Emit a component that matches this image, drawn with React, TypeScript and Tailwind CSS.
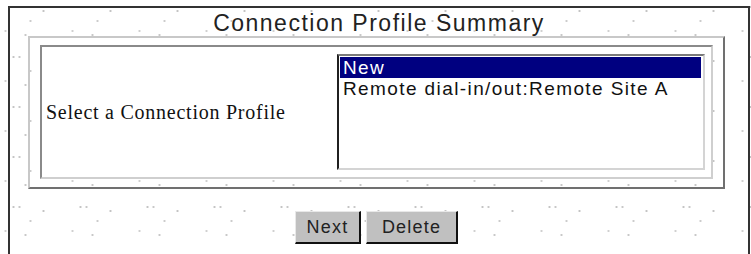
import React from "react";

export default function App() {
  return (
    <div className="w-[751px] h-[254px] overflow-hidden bg-white pt-[6px] pl-[8px] bg-[image:radial-gradient(circle,#c4c4c4_0.9px,transparent_1.3px),radial-gradient(circle,#c8c8c8_0.9px,transparent_1.3px),radial-gradient(circle,#cccccc_0.9px,transparent_1.3px),radial-gradient(circle,#c4c4c4_0.9px,transparent_1.3px),radial-gradient(circle,#d0d0d0_0.9px,transparent_1.3px),radial-gradient(circle,#c8c8c8_0.9px,transparent_1.3px)] bg-[length:67px_50px] bg-[position:-20px_-18px,-14px_-18px,-3px_-4px,10px_-14px,-28px_6px,-8px_10px]">
      <div className="w-[742px] h-[260px] border-2 border-b-0 border-[#333333]">
        <div
          className="pt-[4px] text-center text-[23px] leading-[23px] tracking-[1.5px] text-[#222222]"
          style={{ fontFamily: '"Liberation Sans", Arial, sans-serif' }}
        >
          Connection Profile Summary
        </div>
        <div className="mt-[1px] ml-[18px] w-[697px] h-[153px] border-2 border-t-[#c8c8c8] border-l-[#c8c8c8] border-r-[#707070] border-b-[#707070] pt-[7px] px-[10px] pb-[8px]">
          <div className="h-[134px] border-2 border-t-[#8a8a8a] border-l-[#8a8a8a] border-r-[#cfcfcf] border-b-[#cfcfcf] bg-white flex items-center justify-between pl-[4px] pr-[6px]">
            <div
              className="text-[20px] tracking-[0.75px] text-[#111111]"
              style={{ fontFamily: '"Liberation Serif", "Times New Roman", serif' }}
            >
              Select a Connection Profile
            </div>
            <div
              className="w-[368px] h-[116px] border-2 border-t-[#7a7a7a] border-l-[#202020] border-r-[#d4d4d4] border-b-[#d4d4d4] bg-white pt-[1px] pl-[1px] pr-[2px] text-[19px] leading-[21px] tracking-[1.4px]"
              style={{ fontFamily: '"Liberation Sans", Arial, sans-serif' }}
            >
              <div className="bg-[#000080] text-white pl-[3px]">New</div>
              <div className="text-[#111111] pl-[3px]">Remote dial-in/out:Remote Site A</div>
            </div>
          </div>
        </div>
        <div
          className="mt-[22px] flex justify-center gap-[5px] pr-[5px] text-[18px] tracking-[1.2px] text-[#222222]"
          style={{ fontFamily: '"Liberation Sans", Arial, sans-serif' }}
        >
          <button className="w-[66px] h-[33px] bg-[#c0c0c0] border-t border-l border-r-2 border-b-2 border-t-[#e8e8e8] border-l-[#e8e8e8] border-r-[#111111] border-b-[#111111] flex items-center justify-center">
            Next
          </button>
          <button className="w-[92px] h-[33px] bg-[#c0c0c0] border-t border-l border-r-2 border-b-2 border-t-[#e8e8e8] border-l-[#e8e8e8] border-r-[#111111] border-b-[#111111] flex items-center justify-center">
            Delete
          </button>
        </div>
      </div>
    </div>
  );
}
